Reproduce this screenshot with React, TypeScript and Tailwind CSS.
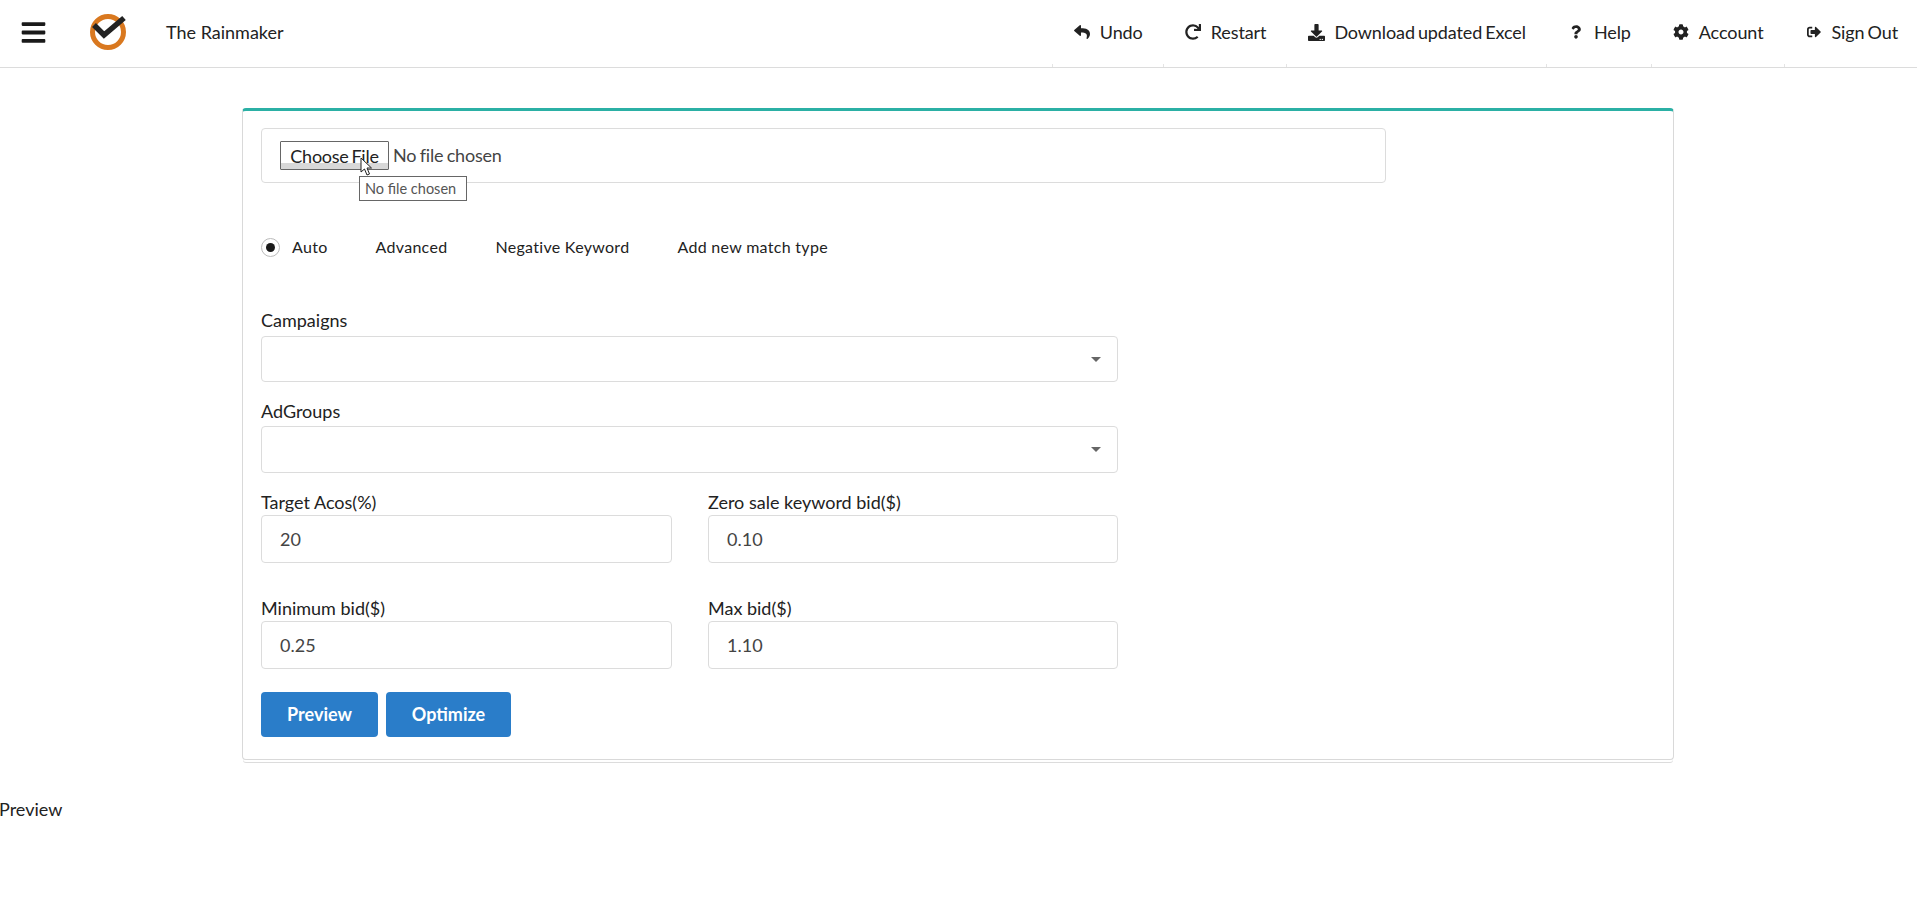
import { FaBars, FaCog, FaDownload, FaQuestion, FaRedo, FaReply, FaSignOutAlt } from "react-icons/fa";
import type { ReactNode } from "react";

const navItems: { label: string; icon: ReactNode }[] = [
  { label: "Undo", icon: <FaReply className="w-[18px] h-[16px]" /> },
  { label: "Restart", icon: <FaRedo className="w-[16px] h-[16px]" /> },
  { label: "Download updated Excel", icon: <FaDownload className="w-[17px] h-[17px]" /> },
  { label: "Help", icon: <FaQuestion className="w-[10px] h-[14px]" /> },
  { label: "Account", icon: <FaCog className="w-[16px] h-[16px]" /> },
  { label: "Sign Out", icon: <FaSignOutAlt className="w-[16px] h-[14px]" /> },
];

const tabs = ["Auto", "Advanced", "Negative Keyword", "Add new match type"];

function Logo() {
  return (
    <svg viewBox="0 0 36 36" className="w-[36px] h-[36px]">
      <circle cx="18" cy="18" r="15.5" fill="none" stroke="#d9781f" strokeWidth="5" />
      <path d="M4 11 L14 21 L34 4" fill="none" stroke="#222" strokeWidth="5.5" />
    </svg>
  );
}

function Cursor() {
  return (
    <svg viewBox="0 0 13 20" className="absolute left-[80px] top-[16px] w-[13px] h-[20px]">
      <path d="M1 1 L1 15 L4.5 12 L7 18 L9.5 17 L7 11 L11.5 11 Z" fill="#fff" stroke="#222" strokeWidth="1" />
    </svg>
  );
}

function FileRow() {
  return (
    <div className="relative w-[1125px] h-[55px] border border-[#dcdcdc] rounded-[4px] flex items-center pl-[18px]">
      <div className="relative flex items-center">
        <button className="w-[109px] h-[29px] border border-[#666] rounded-[1px] text-[18px] leading-[26px] tracking-[-0.25px] [word-spacing:-1.5px] text-[#222] bg-[linear-gradient(#fff_0,#fff_21px,#d8d8d8_21px)]">
          Choose File
        </button>
        <span className="ml-[4px] text-[18px] tracking-[-0.2px] [word-spacing:-1px] text-[#444]">No file chosen</span>
        <Cursor />
        <div className="absolute left-[79px] top-[35px] w-[108px] h-[25px] border border-[#666] bg-white text-[14.5px] leading-[23px] pl-[5px] text-[#555] whitespace-nowrap">
          No file chosen
        </div>
      </div>
    </div>
  );
}

function SelectBox({ className }: { className: string }) {
  return (
    <div className={`w-[857px] border border-[#dcdcdc] rounded-[4px] flex items-center justify-end pr-[16px] ${className}`}>
      <span className="w-0 h-0 border-x-[5px] border-x-transparent border-t-[5px] border-t-[#666]" />
    </div>
  );
}

function NumberField({ label, value, width }: { label: string; value: string; width: string }) {
  return (
    <div>
      <div className="text-[18px] leading-[26px] text-[#222]">{label}</div>
      <div className={`h-[48px] border border-[#dcdcdc] rounded-[4px] flex items-center pl-[18px] text-[18px] text-[#444] ${width}`}>
        {value}
      </div>
    </div>
  );
}

export default function App() {
  return (
    <div className="min-h-[921px] bg-white font-['Lato','Noto_Sans',sans-serif] text-[#222]">
      <header className="h-[68px] border-b border-[#dcdcdc] flex items-center">
        <FaBars className="ml-[20px] mb-[3px] w-[27px] h-[27px] text-[#1a1a1a]" />
        <div className="ml-[43px] mb-[4px]">
          <Logo />
        </div>
        <div className="ml-[40px] mb-[3px] text-[18px]">The Rainmaker</div>
        <nav className="ml-auto mr-[19px] h-full flex">
          {navItems.map((item) => (
            <div key={item.label} className="relative h-full flex items-center pb-[3px] pl-[20px] pr-[20px] last:pr-0 text-[18px] tracking-[-0.1px] [word-spacing:-1.5px]">
              <span className="absolute left-0 bottom-0 w-px h-[3px] bg-[#e4e4e4]" />
              <span className="w-[20px] mr-[8px] flex justify-center text-[#222]">{item.icon}</span>
              {item.label}
            </div>
          ))}
        </nav>
      </header>

      <main className="ml-[242px] mt-[40px] w-[1432px]">
        <section className="h-[652px] border border-[#d9d9d9] border-t-[3px] border-t-[#2bb0a5] rounded-[4px] pt-[17px] pl-[18px] shadow-[0_3px_0_-1px_#fff,0_4px_0_-1px_#dcdcdc]">
          <FileRow />

          <div className="mt-[52px] h-[24px] flex items-center text-[16px] tracking-[0.3px] text-[#222]">
            <span className="w-[19px] h-[19px] rounded-full border border-[#bbb] flex items-center justify-center mr-[12px]">
              <span className="w-[9px] h-[9px] rounded-full bg-[#1a1a1a]" />
            </span>
            {tabs.map((tab) => (
              <span key={tab} className="mr-[48px]">
                {tab}
              </span>
            ))}
          </div>

          <div className="mt-[48px] mb-[3px] text-[18px] leading-[26px]">Campaigns</div>
          <SelectBox className="h-[46px]" />
          <div className="mt-[16px] mb-[2px] text-[18px] leading-[26px]">AdGroups</div>
          <SelectBox className="h-[47px]" />

          <div className="mt-[16px] flex w-[857px] justify-between">
            <NumberField label="Target Acos(%)" value="20" width="w-[411px]" />
            <NumberField label="Zero sale keyword bid($)" value="0.10" width="w-[410px]" />
          </div>
          <div className="mt-[32px] flex w-[857px] justify-between">
            <NumberField label="Minimum bid($)" value="0.25" width="w-[411px]" />
            <NumberField label="Max bid($)" value="1.10" width="w-[410px]" />
          </div>

          <div className="mt-[23px] flex gap-[8px]">
            <button className="w-[117px] h-[45px] rounded-[4px] bg-[#2a7dc9] text-white font-bold text-[18px]">Preview</button>
            <button className="w-[125px] h-[45px] rounded-[4px] bg-[#2a7dc9] text-white font-bold text-[18px]">Optimize</button>
          </div>
        </section>
      </main>

      <div className="mt-[36px] -ml-[1px] text-[18px] leading-[26px]">Preview</div>
    </div>
  );
}
